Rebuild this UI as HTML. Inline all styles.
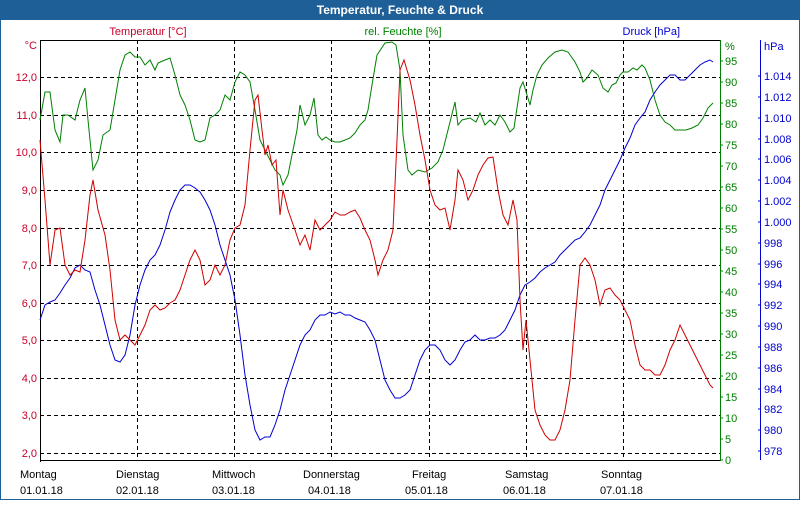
<!DOCTYPE html>
<html><head><meta charset="utf-8"><style>
body{margin:0;width:800px;height:500px;overflow:hidden;background:#fff}
svg text{font-family:"Liberation Sans",sans-serif;font-size:11px}
</style></head><body>
<svg width="800" height="500" xmlns="http://www.w3.org/2000/svg">
<rect x="0.5" y="0.5" width="799" height="499" fill="#fff" stroke="#1e5f97"/>
<rect x="0" y="0" width="800" height="20" fill="#1e5f97"/>
<text x="400" y="14" text-anchor="middle" fill="#fff" font-weight="bold" style="font-size:12px">Temperatur, Feuchte &amp; Druck</text>
<g stroke="#000" stroke-dasharray="4,3" stroke-width="1">
<line x1="137.5" y1="40" x2="137.5" y2="460"/><line x1="234.5" y1="40" x2="234.5" y2="460"/>
<line x1="331.5" y1="40" x2="331.5" y2="460"/><line x1="429.5" y1="40" x2="429.5" y2="460"/>
<line x1="526.5" y1="40" x2="526.5" y2="460"/><line x1="623.5" y1="40" x2="623.5" y2="460"/>
<line x1="40" y1="77.5" x2="720" y2="77.5"/><line x1="40" y1="115.5" x2="720" y2="115.5"/>
<line x1="40" y1="152.5" x2="720" y2="152.5"/><line x1="40" y1="190.5" x2="720" y2="190.5"/>
<line x1="40" y1="228.5" x2="720" y2="228.5"/><line x1="40" y1="265.5" x2="720" y2="265.5"/>
<line x1="40" y1="303.5" x2="720" y2="303.5"/><line x1="40" y1="340.5" x2="720" y2="340.5"/>
<line x1="40" y1="378.5" x2="720" y2="378.5"/><line x1="40" y1="415.5" x2="720" y2="415.5"/>
<line x1="40" y1="453.5" x2="720" y2="453.5"/>
</g>
<g stroke="#000"><line x1="40.5" y1="40" x2="40.5" y2="462"/><line x1="40" y1="40.5" x2="720" y2="40.5"/><line x1="40" y1="460.5" x2="720" y2="460.5"/></g>
<line x1="720.5" y1="40" x2="720.5" y2="461" stroke="#008000"/>
<line x1="760.5" y1="40" x2="760.5" y2="460" stroke="#0000d0"/>
<g fill="#c8002a" text-anchor="end">
<text x="37" y="49">°C</text>
<text x="37" y="81">12,0</text><text x="37" y="119">11,0</text><text x="37" y="156">10,0</text><text x="37" y="194">9,0</text><text x="37" y="232">8,0</text><text x="37" y="269">7,0</text><text x="37" y="307">6,0</text><text x="37" y="344">5,0</text><text x="37" y="382">4,0</text><text x="37" y="419">3,0</text><text x="37" y="457">2,0</text>
</g>
<text x="148" y="35" fill="#c8002a" text-anchor="middle">Temperatur [°C]</text>
<text x="403" y="35" fill="#008000" text-anchor="middle">rel. Feuchte [%]</text>
<text x="680" y="35" fill="#0000d0" text-anchor="end">Druck [hPa]</text>
<g fill="#008000">
<text x="725" y="50">%</text>
<text x="725" y="65">95</text><text x="725" y="86">90</text><text x="725" y="107">85</text><text x="725" y="128">80</text><text x="725" y="149">75</text><text x="725" y="170">70</text><text x="725" y="191">65</text><text x="725" y="212">60</text><text x="725" y="233">55</text><text x="725" y="254">50</text><text x="725" y="275">45</text><text x="725" y="296">40</text><text x="725" y="317">35</text><text x="725" y="338">30</text><text x="725" y="359">25</text><text x="725" y="380">20</text><text x="725" y="401">15</text><text x="725" y="422">10</text><text x="725" y="443">5</text><text x="725" y="464">0</text>
</g>
<g stroke="#008000"><path d="M720 61h3M720 82h3M720 103h3M720 124h3M720 145h3M720 166h3M720 187h3M720 208h3M720 229h3M720 250h3M720 271h3M720 292h3M720 313h3M720 334h3M720 355h3M720 376h3M720 397h3M720 418h3M720 439h3M720 460h3"/></g>
<g fill="#0000d0">
<text x="764" y="50">hPa</text>
<text x="764" y="80">1.014</text><text x="764" y="101">1.012</text><text x="764" y="122">1.010</text><text x="764" y="143">1.008</text><text x="764" y="163">1.006</text><text x="764" y="184">1.004</text><text x="764" y="205">1.002</text><text x="764" y="226">1.000</text><text x="764" y="247">998</text><text x="764" y="268">996</text><text x="764" y="288">994</text><text x="764" y="309">992</text><text x="764" y="330">990</text><text x="764" y="351">988</text><text x="764" y="372">986</text><text x="764" y="393">984</text><text x="764" y="413">982</text><text x="764" y="434">980</text><text x="764" y="455">978</text>
</g>
<g stroke="#0000d0"><path d="M760 76h-2M760 97h-2M760 118h-2M760 139h-2M760 159h-2M760 180h-2M760 201h-2M760 222h-2M760 243h-2M760 264h-2M760 284h-2M760 305h-2M760 326h-2M760 347h-2M760 368h-2M760 389h-2M760 409h-2M760 430h-2M760 451h-2"/></g>
<g fill="#000" text-anchor="start">
<text x="20" y="478">Montag</text><text x="20" y="494">01.01.18</text>
<text x="116" y="478">Dienstag</text><text x="116" y="494">02.01.18</text>
<text x="212" y="478">Mittwoch</text><text x="212" y="494">03.01.18</text>
<text x="303" y="478">Donnerstag</text><text x="308" y="494">04.01.18</text>
<text x="412" y="478">Freitag</text><text x="405" y="494">05.01.18</text>
<text x="505" y="478">Samstag</text><text x="503" y="494">06.01.18</text>
<text x="601" y="478">Sonntag</text><text x="600" y="494">07.01.18</text>
</g>
<g fill="none" stroke-width="1">
<polyline stroke="#0000d0" points="40,320 45,305 50,302 55,300 60,293 65,285 70,278 75,268 80,265 85,270 90,272 95,290 100,305 105,325 110,345 115,360 120,362 125,355 130,335 135,305 140,285 145,270 150,260 155,255 160,245 165,230 170,212 175,200 180,190 185,185 190,185 195,188 200,192 205,200 210,210 215,225 220,245 225,260 230,275 235,300 240,335 245,375 250,405 255,430 260,440 265,437 270,437 275,425 280,410 285,390 290,375 295,360 300,345 305,335 310,330 315,320 320,315 325,315 330,312 335,314 340,312 345,315 350,315 355,318 360,320 365,322 370,330 375,340 380,360 385,380 390,390 395,398 400,398 405,395 410,390 415,375 420,360 425,350 430,345 435,345 440,350 445,360 450,365 455,360 460,350 465,342 470,340 475,335 480,340 485,340 490,338 495,338 500,335 505,330 510,320 515,310 520,295 525,285 530,282 535,278 540,272 545,268 550,265 555,262 560,255 565,250 570,245 575,240 580,238 585,232 590,225 595,215 600,205 605,190 610,180 615,170 620,160 625,148 630,138 635,125 640,118 645,112 650,100 655,92 660,85 665,80 670,75 675,75 680,80 685,80 690,75 695,70 700,65 705,62 710,60 713,62"/>
<polyline stroke="#008000" points="40,120 45,92 50,92 55,130 60,142 63,115 68,115 75,120 80,100 85,88 88,120 93,170 98,160 103,135 110,130 115,100 120,70 125,55 130,52 135,57 140,57 145,65 150,60 155,70 158,63 165,60 170,58 175,75 180,95 185,105 190,120 195,140 200,142 205,140 210,118 215,115 220,110 225,95 230,100 235,82 240,72 245,75 250,82 255,110 260,140 265,150 270,160 275,170 280,175 283,185 288,175 292,155 297,130 300,105 305,125 310,115 314,98 318,135 322,140 326,137 330,140 335,142 340,142 345,140 350,138 355,133 360,125 365,120 368,110 372,85 377,55 385,43 392,42 396,45 400,70 403,135 408,170 412,175 418,170 425,172 432,168 438,162 443,150 448,130 451,118 455,102 458,125 462,120 470,118 476,122 480,113 485,125 490,120 495,125 500,115 505,122 510,132 514,128 517,108 520,88 523,82 527,95 530,105 533,90 537,75 542,65 548,58 555,52 562,50 568,52 575,62 580,72 583,82 587,78 592,70 598,75 603,88 608,92 612,85 616,83 620,75 623,72 628,72 633,68 637,70 642,65 645,68 650,80 655,100 660,115 665,122 670,125 675,130 680,130 686,130 692,128 698,125 703,118 708,108 713,103"/>
<polyline stroke="#d00000" points="40,140 45,200 50,265 55,230 60,228 65,265 70,275 75,270 80,272 85,240 90,195 93,180 98,210 105,235 110,270 115,320 120,340 125,335 130,340 135,345 140,335 145,325 150,310 155,305 160,310 165,308 170,303 175,300 180,290 185,275 190,260 195,250 200,260 205,285 210,280 215,265 220,275 225,265 230,240 235,228 240,225 245,205 250,150 255,100 258,95 262,130 265,155 268,145 272,165 276,160 280,215 283,190 288,210 295,230 300,245 305,235 310,250 315,220 320,230 325,225 330,220 335,212 340,215 345,215 350,212 355,210 360,218 365,230 370,240 375,260 378,275 383,260 388,250 393,230 397,140 400,70 404,60 410,80 415,105 420,135 425,160 430,190 435,205 440,210 445,208 450,230 455,200 458,170 463,180 468,200 473,190 478,175 483,165 488,158 493,157 498,190 503,215 508,225 513,200 517,220 520,300 523,350 526,320 530,360 535,410 540,425 545,435 550,440 555,440 560,430 565,410 570,380 575,320 580,265 585,258 590,265 595,280 600,305 605,290 610,288 615,295 620,300 625,310 630,320 635,345 640,365 645,370 650,370 655,375 660,375 665,365 670,350 675,340 680,325 685,335 690,345 695,355 700,365 705,375 710,385 713,388"/>
</g>
</svg>
</body></html>
